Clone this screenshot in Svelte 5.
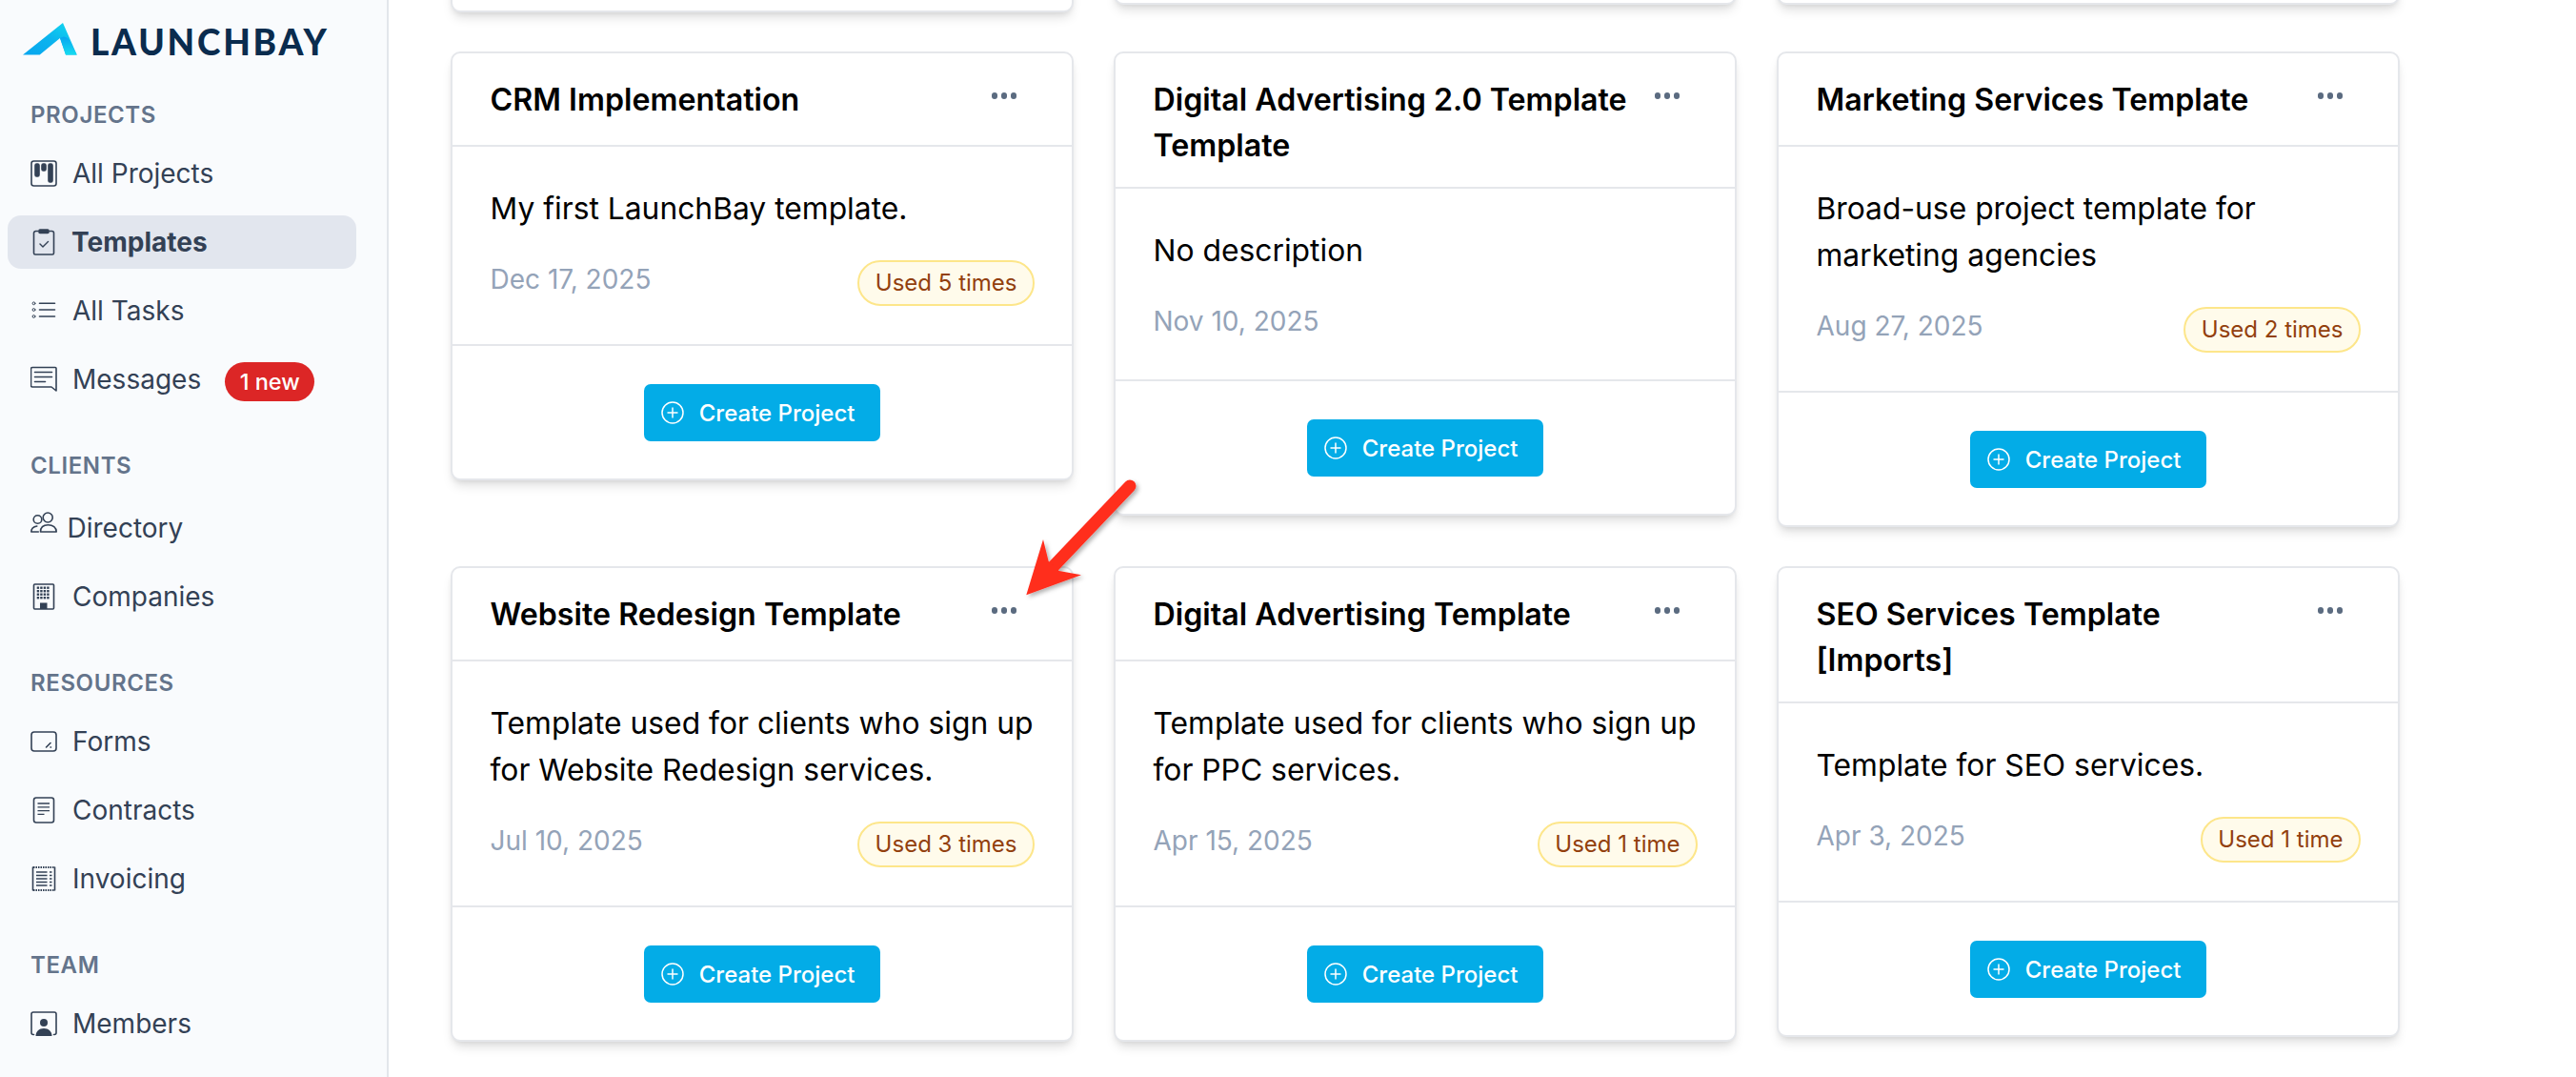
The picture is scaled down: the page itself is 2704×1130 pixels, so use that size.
<script>
  const nav = [
    { title: 'PROJECTS', items: [
      { label: 'All Projects', icon: 'board' },
      { label: 'Templates', icon: 'clip', active: true },
      { label: 'All Tasks', icon: 'list' },
      { label: 'Messages', icon: 'msg', badge: '1 new' }
    ] },
    { title: 'CLIENTS', roomy: true, items: [
      { label: 'Directory', icon: 'people', tight: true },
      { label: 'Companies', icon: 'building' }
    ] },
    { title: 'RESOURCES', items: [
      { label: 'Forms', icon: 'form' },
      { label: 'Contracts', icon: 'doc' },
      { label: 'Invoicing', icon: 'receipt' }
    ] },
    { title: 'TEAM', items: [
      { label: 'Members', icon: 'member' }
    ] }
  ];
  const cards = [
    { stub: true }, { stub: true, h: 284 }, { stub: true, h: 284 },
    { title: 'CRM Implementation', desc: 'My first LaunchBay template.', date: 'Dec 17, 2025', used: 'Used 5 times' },
    { title: 'Digital Advertising 2.0 Template Template', desc: 'No description', date: 'Nov 10, 2025', used: null },
    { title: 'Marketing Services Template', desc: 'Broad-use project template for marketing agencies', date: 'Aug 27, 2025', used: 'Used 2 times' },
    { title: 'Website Redesign Template', desc: 'Template used for clients who sign up for Website Redesign services.', date: 'Jul 10, 2025', used: 'Used 3 times' },
    { title: 'Digital Advertising Template', desc: 'Template used for clients who sign up for PPC services.', date: 'Apr 15, 2025', used: 'Used 1 time' },
    { title: 'SEO Services Template [Imports]', desc: 'Template for SEO services.', date: 'Apr 3, 2025', used: 'Used 1 time' }
  ];
</script>

{#snippet icon(name)}
  <svg class="ico" viewBox="0 0 28 28" fill="none" stroke="currentColor" stroke-width="1.6" stroke-linecap="round" stroke-linejoin="round">
    {#if name === 'board'}
      <rect x="1" y="1" width="26" height="26" rx="2.5" />
      <rect x="5" y="4" width="4" height="13" rx="1.5" fill="currentColor" />
      <rect x="12" y="4" width="4" height="7" rx="1.5" fill="currentColor" />
      <rect x="19" y="4" width="4" height="19" rx="1.5" fill="currentColor" />
    {:else if name === 'clip'}
      <path d="M8 2.500H5.500a2 2 0 0 0-2 2V25.500a1.500 1.500 0 0 0 1.500 1.500h18a1.500 1.500 0 0 0 1.500-1.500V4.500a2 2 0 0 0-2-2H20" />
      <rect x="9" y="1" width="10" height="3.500" rx="1" fill="currentColor" />
      <path d="M10 16l3 3 5.500-5.500" stroke-width="1.400" />
    {:else if name === 'list'}
      <circle cx="3.500" cy="6.300" r="1.400" stroke-width="1" />
      <circle cx="3.500" cy="13" r="1.400" stroke-width="1" />
      <circle cx="3.500" cy="20" r="1.400" stroke-width="1" />
      <path d="M9.500 6.300h16M9.500 13h16M9.500 20h16" />
    {:else if name === 'msg'}
      <path d="M2 1.500h24a1 1 0 0 1 1 1V26l-5-4H2a1.500 1.500 0 0 1-1.500-1.500V3A1.500 1.500 0 0 1 2 1.500z" />
      <path d="M4.500 6.500h18M4.500 11.500h18M4.500 16.500h11" />
    {:else if name === 'people'}
      <circle cx="7.500" cy="11" r="4.300" />
      <circle cx="18.200" cy="9" r="5" />
      <path d="M.8 24c0-3 2.200-5.400 6-6M.8 24h7.500" />
      <path d="M10.500 24c0-4.500 3-7.300 8-7.300s8.700 2.800 8.700 7.300z" />
    {:else if name === 'building'}
      <rect x="3.500" y="1" width="21" height="26" rx="1" />
      <g fill="currentColor" stroke="none">
        {#each [3.500,7,10.500,14] as y}{#each [6.700,10.200,13.700,17.200] as x}<rect x={x} y={y} width="2.400" height="2.400" />{/each}{/each}
        <rect x="10" y="20.500" width="7.500" height="6.500" />
      </g>
    {:else if name === 'form'}
      <rect x="1" y="4" width="26" height="20" rx="3" />
      <path d="M16.500 20l4.500-4.500M21 20h.5" />
    {:else if name === 'doc'}
      <rect x="3.500" y="1" width="21" height="26" rx="2.500" />
      <path d="M7.500 7h12.500M7.500 10.800h12.500M7.500 14.600h12.500M7.500 18.400h7" stroke-width="1.300" stroke-linecap="butt" />
    {:else if name === 'receipt'}
      <path d="M3 2h22M3 26h22" stroke-dasharray="1.500 1" stroke-linecap="butt" stroke-width="1.800" />
      <path d="M2.500 2v24M25.500 2v24" />
      <path d="M6 7h11.500M6 10.500h11.500M6 14h11.500M6 17.500h11.500M6 21h11.500M20 7h2.500M20 10.500h2.500M20 14h2.500M20 17.500h2.500M20 21h2.500" stroke-linecap="butt" />
    {:else if name === 'member'}
      <path d="M3.500 25.500h-.5A2 2 0 0 1 1 23.500V4a2 2 0 0 1 2-2h22a2 2 0 0 1 2 2v19.500a2 2 0 0 1-2 2h-.5" />
      <circle cx="14" cy="13" r="4" fill="currentColor" stroke="none" />
      <path d="M5.500 27c0-4.500 3.500-8 8.500-8s8.500 3.500 8.500 8z" fill="currentColor" stroke="none" />
    {/if}
  </svg>
{/snippet}

<div class="app">
  <aside class="sidebar">
    <div class="brand">
      <svg class="logo" viewBox="0 0 57 33.500">
        <defs>
          <linearGradient id="lg1" x1="0" y1="1" x2="1" y2="0">
            <stop offset="0" stop-color="#08a6ef" />
            <stop offset=".5" stop-color="#0cb4ee" />
            <stop offset="1" stop-color="#12dcf0" />
          </linearGradient>
          <linearGradient id="lg2" x1="0" y1="0" x2="0" y2="1">
            <stop offset="0" stop-color="#08a4f0" />
            <stop offset="1" stop-color="#16dcf0" />
          </linearGradient>
        </defs>
        <path d="M0 33.400 42 0l14.700 33.400H45L39 16 17.700 33.400z" fill="url(#lg1)" />
        <path d="M39 16Q44 12.500 48 17L56.700 33.400H45z" fill="url(#lg2)" />
      </svg>
      <span class="wordmark">LAUNCHBAY</span>
    </div>
    {#each nav as group}
      <section class="group">
        <h3 class:roomy={group.roomy}>{group.title}</h3>
        {#each group.items as item}
          <div class="row" class:active={item.active} class:tight={item.tight}>
            {@render icon(item.icon)}
            <span>{item.label}</span>
            {#if item.badge}<b class="pill">{item.badge}</b>{/if}
          </div>
        {/each}
      </section>
    {/each}
  </aside>

  <main class="main">
    <div class="grid">
      {#each cards as card}
        {#if card.stub}
          <div class="card stub" style:height={(card.h ?? 292) + 'px'}></div>
        {:else}
          <article class="card">
            <header>
              <h2>{card.title}</h2>
              <div class="dots"><i></i><i></i><i></i></div>
            </header>
            <div class="body">
              <p>{card.desc}</p>
              <div class="meta">
                <time>{card.date}</time>
                {#if card.used}<span class="used">{card.used}</span>{/if}
              </div>
            </div>
            <footer>
              <button>
                <svg viewBox="0 0 24 24" fill="none" stroke="currentColor" stroke-width="1.500"><circle cx="12" cy="12" r="11" /><path d="M12 6.500v11M6.500 12h11" /></svg>
                Create Project
              </button>
            </footer>
          </article>
        {/if}
      {/each}
    </div>
    <svg class="arrow" viewBox="0 0 150 150">
      <defs>
        <filter id="as" x="-20%" y="-20%" width="140%" height="140%">
          <feDropShadow dx="2.500" dy="2.500" stdDeviation="2" flood-color="#000" flood-opacity=".3" />
        </filter>
      </defs>
      <g filter="url(#as)">
        <path d="M126 20 L46 104" stroke="#ff2d1f" stroke-width="13" stroke-linecap="round" />
        <path d="M17.300 134.300 L35 76 L40.700 99 L51.700 109 L75 113.300z" fill="#ff2d1f" />
      </g>
    </svg>
  </main>
</div>

<style>
  :global(body) {
    margin: 0;
    background: #fff;
    font-family: Inter, "Liberation Sans", sans-serif;
  }
  .app {
    display: flex;
    width: 2704px;
    height: 1130px;
    overflow: hidden;
  }
  .sidebar {
    box-sizing: border-box;
    width: 408px;
    height: 1130px;
    flex: none;
    background: #f9fbfd;
    border-right: 2px solid #e2e6eb;
    color: #334155;
    padding: 24px 32px 0 8px;
    overflow: hidden;
  }
  .brand {
    display: flex;
    align-items: center;
    gap: 14px;
    padding-left: 16px;
    height: 34px;
    margin-bottom: 45px;
  }
  .logo {
    width: 57px;
    height: 33.500px;
    flex: none;
  }
  .wordmark {
    font-family: Lato, sans-serif;
    font-weight: 900;
    font-size: 37px;
    letter-spacing: 2.800px;
    color: #0a2c4e;
    line-height: 33px;
    margin-top: 5px;
  }
  .group {
    margin-bottom: 45px;
  }
  h3 {
    margin: 0 0 15px;
    padding-left: 24px;
    height: 36px;
    line-height: 36px;
    font-size: 24px;
    font-weight: 600;
    letter-spacing: 0.6px;
    color: #64748b;
  }
  h3.roomy {
    margin-bottom: 19px;
  }
  .row {
    display: flex;
    align-items: center;
    gap: 16px;
    height: 56px;
    margin-bottom: 16px;
    padding-left: 24px;
    border-radius: 14px;
    font-size: 28px;
    color: #334155;
  }
  .row.active {
    background: #e2e6ee;
    font-weight: 700;
    gap: 15px;
  }
  .row.tight {
    gap: 10.500px;
  }
  .ico {
    width: 28px;
    height: 28px;
    flex: none;
  }
  .tight .ico {
    margin-top: -12px;
  }
  .pill {
    margin: 5px 0 0 9px;
    padding: 0 15.500px;
    height: 41px;
    line-height: 41px;
    border-radius: 21px;
    background: #dc2626;
    color: #fff;
    font-size: 23.500px;
    font-weight: 500;
  }
  .main {
    position: relative;
    flex: 1;
    min-width: 0;
  }
  .grid {
    display: grid;
    grid-template-columns: repeat(3, 654.500px);
    column-gap: 41.500px;
    row-gap: 41px;
    align-items: start;
    margin: -279px 0 0 64.500px;
  }
  .card {
    box-sizing: border-box;
    background: #fff;
    border: 2px solid #e5e7eb;
    border-radius: 10px;
    box-shadow: 0 8px 12px -3px rgba(0, 0, 0, 0.13), 0 3px 6px -3px rgba(0, 0, 0, 0.1);
  }
  header {
    position: relative;
    box-sizing: border-box;
    min-height: 98px;
    padding: 25px 110px 19px 40px;
    border-bottom: 2px solid #e5e7eb;
  }
  h2 {
    margin: 0;
    font-size: 32.200px;
    line-height: 48px;
    font-weight: 600;
    color: #000;
  }
  .dots {
    position: absolute;
    top: 41px;
    right: 58px;
    display: flex;
    gap: 3.500px;
  }
  .dots i {
    width: 6.500px;
    height: 6.500px;
    border-radius: 50%;
    background: #5b6b80;
  }
  .body {
    padding: 40px 40px 40px;
    border-bottom: 2px solid #e5e7eb;
  }
  p {
    margin: 0 0 30px;
    font-size: 31.800px;
    line-height: 49px;
    color: #000;
  }
  .meta {
    display: flex;
    justify-content: space-between;
    align-items: flex-start;
    margin-right: -1px;
  }
  time {
    margin: 1px 0 2px;
    font-size: 28px;
    line-height: 38px;
    color: #94a3b8;
  }
  .used {
    box-sizing: border-box;
    height: 48px;
    line-height: 44px;
    padding: 0 16.500px;
    font-size: 24px;
    border: 2px solid #fde68a;
    border-radius: 24px;
    background: #fffbeb;
    color: #92400e;
  }
  footer {
    display: flex;
    justify-content: center;
    padding: 40px 0 39px;
  }
  button {
    display: flex;
    align-items: center;
    gap: 16px;
    box-sizing: border-box;
    width: 248px;
    height: 60px;
    padding: 0 0 0 18px;
    border: 0;
    border-radius: 7px;
    background: #03ace7;
    color: #fff;
    font: 500 24px Inter, sans-serif;
  }
  button svg {
    width: 24px;
    height: 24px;
    flex: none;
  }
  .arrow {
    position: absolute;
    left: 652px;
    top: 490px;
    width: 150px;
    height: 150px;
    pointer-events: none;
  }
</style>
